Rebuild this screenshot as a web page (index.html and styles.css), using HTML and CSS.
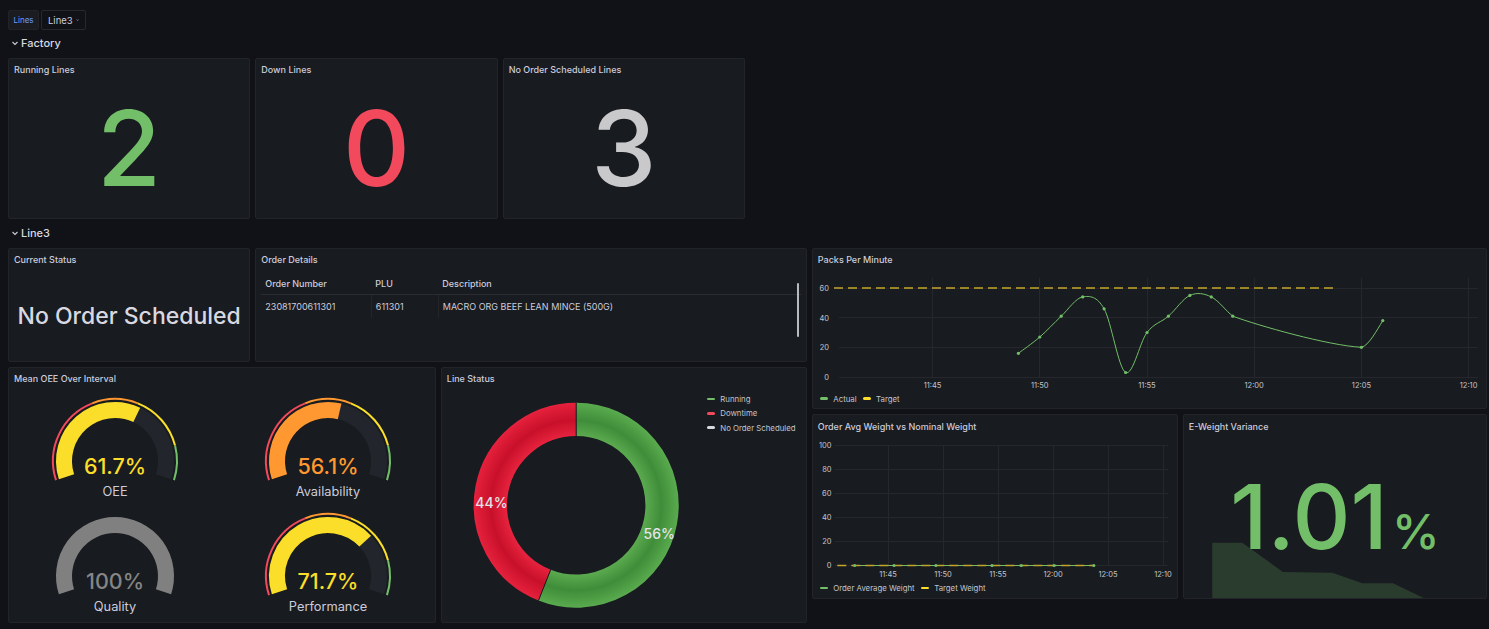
FILE: index.html
```html
<!DOCTYPE html>
<html lang="en">
<head>
<meta charset="utf-8">
<title>Factory Dashboard</title>
<link rel="stylesheet" href="styles.css">
</head>
<body>
<div class="topbar">
  <div class="chip chip-label">Lines</div>
  <div class="chip chip-select">Line3 <svg class="caret" width="6" height="6" viewBox="0 0 6 6"><polyline points="1,2 3,4 5,2"/></svg></div>
</div>

<div class="dash">
  <div class="row-head r-factory"><svg class="chev" width="8" height="8" viewBox="0 0 8 8"><polyline points="1.5,3 4,5.5 6.5,3"/></svg>Factory</div>

  <section class="panel p-running">
    <div class="panel-title">Running Lines</div>
    <div class="panel-body stat"><span class="stat-value green">2</span></div>
  </section>
  <section class="panel p-down">
    <div class="panel-title">Down Lines</div>
    <div class="panel-body stat"><span class="stat-value red">0</span></div>
  </section>
  <section class="panel p-noorder">
    <div class="panel-title">No Order Scheduled Lines</div>
    <div class="panel-body stat"><span class="stat-value grey">3</span></div>
  </section>

  <div class="row-head r-line3"><svg class="chev" width="8" height="8" viewBox="0 0 8 8"><polyline points="1.5,3 4,5.5 6.5,3"/></svg>Line3</div>

  <section class="panel p-status">
    <div class="panel-title">Current Status</div>
    <div class="panel-body stat"><span class="status-text">No Order Scheduled</span></div>
  </section>

  <section class="panel p-order">
    <div class="panel-title">Order Details</div>
    <div class="panel-body table-body">
      <table class="orders">
        <thead>
          <tr><th class="c1">Order Number</th><th class="c2">PLU</th><th>Description</th></tr>
        </thead>
        <tbody>
          <tr><td class="c1">23081700611301</td><td class="c2">611301</td><td>MACRO ORG BEEF LEAN MINCE (500G)</td></tr>
        </tbody>
      </table>
      <div class="scroll-thumb"></div>
    </div>
  </section>

  <section class="panel p-packs">
    <div class="panel-title">Packs Per Minute</div>
    <div class="panel-body chart-body">
      <svg class="chart" width="673" height="120" viewBox="0 0 673 120">
        <g class="grid">
          <line x1="26" y1="16.5" x2="665" y2="16.5"/>
          <line x1="26" y1="45.5" x2="665" y2="45.5"/>
          <line x1="26" y1="75.5" x2="665" y2="75.5"/>
          <line x1="26" y1="105.5" x2="665" y2="105.5"/>
          <line x1="119.5" y1="6" x2="119.5" y2="105"/>
          <line x1="226.5" y1="6" x2="226.5" y2="105"/>
          <line x1="334.5" y1="6" x2="334.5" y2="105"/>
          <line x1="441.5" y1="6" x2="441.5" y2="105"/>
          <line x1="548.5" y1="6" x2="548.5" y2="105"/>
          <line x1="655.5" y1="6" x2="655.5" y2="105"/>
        </g>
        <g class="axis ylab">
          <text x="16" y="16.5">60</text>
          <text x="16" y="46">40</text>
          <text x="16" y="75.5">20</text>
          <text x="16" y="105">0</text>
        </g>
        <g class="axis xlab">
          <text x="119.6" y="113">11:45</text>
          <text x="226.8" y="113">11:50</text>
          <text x="334" y="113">11:55</text>
          <text x="441.2" y="113">12:00</text>
          <text x="548.4" y="113">12:05</text>
          <text x="655.6" y="113">12:10</text>
        </g>
        <line class="target" x1="21" y1="16" x2="520" y2="16"/>
        <path class="actual" d="M205.4,81.3 C209,78.6 219.65,71.18 226.8,65 C233.95,58.82 241.05,50.88 248.2,44.2 C255.35,37.52 262.55,26.13 269.7,24.9 C276.85,23.67 283.95,24.2 291.1,36.8 C298.25,49.4 305.45,96.55 312.6,100.5 C319.75,104.45 326.85,69.88 334,60.5 C341.15,51.12 348.25,50.38 355.4,44.2 C362.55,38.02 369.75,26.62 376.9,23.4 C384.05,20.18 391.15,21.43 398.3,24.9 C405.45,28.37 413.5,39.5 419.8,44.2 C445,53.5 515,73.5 548.4,75.3 C555.5,74 564,58 569.8,48.6"/>
        <g class="dots">
          <circle cx="205.4" cy="81.3" r="1.6"/>
          <circle cx="226.8" cy="65" r="1.6"/>
          <circle cx="248.2" cy="44.2" r="1.6"/>
          <circle cx="269.7" cy="24.9" r="1.6"/>
          <circle cx="291.1" cy="36.8" r="1.6"/>
          <circle cx="312.6" cy="100.5" r="1.6"/>
          <circle cx="334" cy="60.5" r="1.6"/>
          <circle cx="355.4" cy="44.2" r="1.6"/>
          <circle cx="376.9" cy="23.4" r="1.6"/>
          <circle cx="398.3" cy="24.9" r="1.6"/>
          <circle cx="419.8" cy="44.2" r="1.6"/>
          <circle cx="548.4" cy="75.3" r="1.6"/>
          <circle cx="569.8" cy="48.6" r="1.6"/>
        </g>
      </svg>
      <div class="legend">
        <span class="lg-item"><i class="sw sw-green"></i>Actual</span>
        <span class="lg-item"><i class="sw sw-yellow"></i>Target</span>
      </div>
    </div>
  </section>

  <section class="panel p-oee">
    <div class="panel-title">Mean OEE Over Interval</div>
    <div class="panel-body gauges">
      <div class="gauge-cell">
        <svg class="gauge" width="140" height="104" viewBox="0 0 140 104">
          <path class="ring ring-red" d="M11.03,83.16 A62,62 0 0 1 47.18,6.35"/>
          <path class="ring ring-orange" d="M47.18,6.35 A62,62 0 0 1 92.82,6.35"/>
          <path class="ring ring-yellow" d="M92.82,6.35 A62,62 0 0 1 130.05,48.58"/>
          <path class="ring ring-green" d="M130.05,48.58 A62,62 0 0 1 128.97,83.16"/>
          <path class="bar bar-bg" d="M21.49,79.76 A51,51 0 1 1 118.51,79.76"/>
          <path class="bar bar-yellow" d="M21.49,79.76 A51,51 0 0 1 91.77,17.88"/>
          <text class="g-value t-yellow" x="70" y="69">61.7%</text>
          <text class="g-label" x="70" y="94.5">OEE</text>
        </svg>
      </div>
      <div class="gauge-cell">
        <svg class="gauge" width="140" height="104" viewBox="0 0 140 104">
          <path class="ring ring-red" d="M11.03,83.16 A62,62 0 0 1 47.18,6.35"/>
          <path class="ring ring-orange" d="M47.18,6.35 A62,62 0 0 1 92.82,6.35"/>
          <path class="ring ring-yellow" d="M92.82,6.35 A62,62 0 0 1 130.05,48.58"/>
          <path class="ring ring-green" d="M130.05,48.58 A62,62 0 0 1 128.97,83.16"/>
          <path class="bar bar-bg" d="M21.49,79.76 A51,51 0 1 1 118.51,79.76"/>
          <path class="bar bar-orange" d="M21.49,79.76 A51,51 0 0 1 81.63,14.34"/>
          <text class="g-value t-orange" x="70" y="69">56.1%</text>
          <text class="g-label" x="70" y="94.5">Availability</text>
        </svg>
      </div>
      <div class="gauge-cell">
        <svg class="gauge" width="140" height="104" viewBox="0 0 140 104">
          <path class="bar bar-grey" d="M21.49,79.76 A51,51 0 1 1 118.51,79.76"/>
          <text class="g-value t-grey" x="70" y="69">100%</text>
          <text class="g-label" x="70" y="94.5">Quality</text>
        </svg>
      </div>
      <div class="gauge-cell">
        <svg class="gauge" width="140" height="104" viewBox="0 0 140 104">
          <path class="ring ring-red" d="M11.03,83.16 A62,62 0 0 1 47.18,6.35"/>
          <path class="ring ring-orange" d="M47.18,6.35 A62,62 0 0 1 92.82,6.35"/>
          <path class="ring ring-yellow" d="M92.82,6.35 A62,62 0 0 1 130.05,48.58"/>
          <path class="ring ring-green" d="M130.05,48.58 A62,62 0 0 1 128.97,83.16"/>
          <path class="bar bar-bg" d="M21.49,79.76 A51,51 0 1 1 118.51,79.76"/>
          <path class="bar bar-yellow" d="M21.49,79.76 A51,51 0 0 1 107.22,29.14"/>
          <text class="g-value t-yellow" x="70" y="69">71.7%</text>
          <text class="g-label" x="70" y="94.5">Performance</text>
        </svg>
      </div>
    </div>
  </section>

  <section class="panel p-linestatus">
    <div class="panel-title">Line Status</div>
    <div class="panel-body pie-body">
      <svg class="pie" width="265" height="231" viewBox="0 0 265 231">
        <defs>
          <radialGradient id="gGreen" gradientUnits="userSpaceOnUse" cx="134.2" cy="114.3" r="102.5">
            <stop offset="0.67" stop-color="#5cab50"/>
            <stop offset="0.83" stop-color="#3f8d39"/>
            <stop offset="1" stop-color="#5aab4f"/>
          </radialGradient>
          <radialGradient id="gRed" gradientUnits="userSpaceOnUse" cx="134.2" cy="114.3" r="102.5">
            <stop offset="0.67" stop-color="#e8243f"/>
            <stop offset="0.83" stop-color="#c8102a"/>
            <stop offset="1" stop-color="#e6213d"/>
          </radialGradient>
        </defs>
        <path class="slice" stroke="url(#gGreen)" d="M134.2,28.45 A85.85,85.85 0 1 1 102.6,194.12"/>
        <path class="slice" stroke="url(#gRed)" d="M102.6,194.12 A85.85,85.85 0 0 1 134.2,28.45"/>
        <line class="sep" x1="134.2" y1="45.1" x2="134.2" y2="11.8"/>
        <line class="sep" x1="108.73" y1="178.64" x2="96.47" y2="209.6"/>
        <text class="pie-label" x="217.2" y="142.8">56%</text>
        <text class="pie-label" x="49.5" y="111.2">44%</text>
      </svg>
      <div class="pie-legend">
        <span class="lg-item"><i class="sw sw-green"></i>Running</span>
        <span class="lg-item"><i class="sw sw-red"></i>Downtime</span>
        <span class="lg-item"><i class="sw sw-white"></i>No Order Scheduled</span>
      </div>
    </div>
  </section>

  <section class="panel p-weight">
    <div class="panel-title">Order Avg Weight vs Nominal Weight</div>
    <div class="panel-body chart-body">
      <svg class="chart" width="364" height="143" viewBox="0 0 364 143">
        <g class="grid">
          <line x1="22" y1="7.5" x2="355" y2="7.5"/>
          <line x1="22" y1="31.5" x2="355" y2="31.5"/>
          <line x1="22" y1="55.5" x2="355" y2="55.5"/>
          <line x1="22" y1="79.5" x2="355" y2="79.5"/>
          <line x1="22" y1="103.5" x2="355" y2="103.5"/>
          <line x1="22" y1="127.5" x2="355" y2="127.5"/>
          <line x1="75.5" y1="7" x2="75.5" y2="127"/>
          <line x1="130.5" y1="7" x2="130.5" y2="127"/>
          <line x1="185.5" y1="7" x2="185.5" y2="127"/>
          <line x1="240.5" y1="7" x2="240.5" y2="127"/>
          <line x1="295.5" y1="7" x2="295.5" y2="127"/>
          <line x1="350.5" y1="7" x2="350.5" y2="127"/>
        </g>
        <g class="axis ylab">
          <text x="18.5" y="7.5">100</text>
          <text x="18.5" y="31.5">80</text>
          <text x="18.5" y="55.5">60</text>
          <text x="18.5" y="79.5">40</text>
          <text x="18.5" y="103.5">20</text>
          <text x="18.5" y="127.5">0</text>
        </g>
        <g class="axis xlab">
          <text x="75" y="136">11:45</text>
          <text x="130" y="136">11:50</text>
          <text x="185" y="136">11:55</text>
          <text x="240" y="136">12:00</text>
          <text x="295" y="136">12:05</text>
          <text x="350" y="136">12:10</text>
        </g>
        <line class="flat-green" x1="41.7" y1="127.5" x2="280.8" y2="127.5"/>
        <line class="target" x1="24.3" y1="127.5" x2="281.7" y2="127.5"/>
        <g class="dots">
          <circle cx="41.7" cy="127.5" r="1.6"/>
          <circle cx="81" cy="127.5" r="1.6"/>
          <circle cx="122.9" cy="127.5" r="1.6"/>
          <circle cx="179" cy="127.5" r="1.6"/>
          <circle cx="208.3" cy="127.5" r="1.6"/>
          <circle cx="241" cy="127.5" r="1.6"/>
          <circle cx="280.8" cy="127.5" r="1.6"/>
        </g>
      </svg>
      <div class="legend">
        <span class="lg-item"><i class="sw sw-green"></i>Order Average Weight</span>
        <span class="lg-item"><i class="sw sw-yellow"></i>Target Weight</span>
      </div>
    </div>
  </section>

  <section class="panel p-eweight">
    <div class="panel-title">E-Weight Variance</div>
    <div class="panel-body stat spark-body">
      <svg class="spark" width="302" height="160" viewBox="0 0 302 160">
        <polygon points="28.3,160 28.3,104.7 58.3,104.7 99,134 148.3,134.7 178.3,145.3 209,145.3 239.7,160"/>
      </svg>
      <span class="big-value">1.01<span class="unit">%</span></span>
    </div>
  </section>
</div>
</body>
</html>
```

FILE: styles.css
```css
* { box-sizing: border-box; }
html, body { margin: 0; height: 100%; }
body {
  background: #111217;
  font-family: Inter, "Noto Sans", sans-serif;
  color: #ccccdc;
  overflow: hidden;
}

/* top variable bar */
.topbar {
  display: flex;
  gap: 2px;
  height: 34px;
  padding: 10px 8px 4px;
}
.chip {
  height: 20px;
  display: flex;
  align-items: center;
  border-radius: 2px;
}
.chip-label {
  width: 31px;
  justify-content: center;
  background: #1a1c21;
  border: 1px solid #202227;
  color: #6e9fff;
  font-size: 8px;
}
.chip-select {
  width: 45px;
  padding: 0 6px;
  gap: 3px;
  border: 1px solid #26282d;
  font-size: 9.5px;
  color: #ccccdc;
}
.caret polyline { fill: none; stroke: #ccccdc; stroke-width: 1; }

/* dashboard grid */
.dash {
  display: grid;
  grid-template-columns: repeat(24, 1fr);
  grid-auto-rows: 18.75px;
  gap: 5px;
  padding: 0 2px 0 8px;
}
.row-head {
  grid-column: 1 / -1;
  display: flex;
  align-items: center;
  gap: 2px;
  padding-left: 3px;
  font-size: 11px;
  font-weight: 500;
  color: #d8d9e0;
}
.chev polyline { fill: none; stroke: #ccccdc; stroke-width: 1.1; }
.r-factory { grid-row: 1; }
.r-line3 { grid-row: 9; }

.p-running  { grid-column: 1 / span 4;  grid-row: 2 / span 7; }
.p-down     { grid-column: 5 / span 4;  grid-row: 2 / span 7; }
.p-noorder  { grid-column: 9 / span 4;  grid-row: 2 / span 7; }
.p-status   { grid-column: 1 / span 4;  grid-row: 10 / span 5; }
.p-order    { grid-column: 5 / span 9;  grid-row: 10 / span 5; }
.p-packs    { grid-column: 14 / span 11; grid-row: 10 / span 7; }
.p-oee      { grid-column: 1 / span 7;  grid-row: 15 / span 11; }
.p-linestatus { grid-column: 8 / span 6; grid-row: 15 / span 11; }
.p-weight   { grid-column: 14 / span 6; grid-row: 17 / span 8; }
.p-eweight  { grid-column: 20 / span 5; grid-row: 17 / span 8; }

.panel {
  background: #181b1f;
  border: 1px solid #222429;
  border-radius: 2px;
  display: flex;
  flex-direction: column;
  min-width: 0;
  min-height: 0;
  overflow: hidden;
}
.panel-title {
  flex: none;
  height: 22px;
  display: flex;
  align-items: center;
  padding: 0 5px;
  font-size: 9px;
  font-weight: 500;
  color: #ccccdc;
  white-space: nowrap;
}
.panel-body {
  flex: 1;
  min-height: 0;
  position: relative;
}

/* stats */
.stat {
  display: flex;
  align-items: center;
  justify-content: center;
}
.stat-value {
  font-size: 104px;
  line-height: 1;
  font-weight: 500;
  margin-bottom: 2px;
}
.green { color: #73bf69; }
.red { color: #f2495c; }
.grey { color: #c9c9cc; }
.status-text {
  font-size: 23px;
  font-weight: 500;
  color: #d8d9e0;
  white-space: nowrap;
}

/* table */
.table-body { padding: 1px 5px 0; }
.orders {
  width: 540px;
  border-collapse: collapse;
  font-size: 9px;
  color: #ccccdc;
}
.orders th {
  height: 23px;
  text-align: left;
  font-weight: 500;
  padding: 0 4px;
  border-bottom: 1px solid #2a2c31;
}
.orders td {
  height: 23px;
  padding: 0 4px;
  border-right: 1px solid #23252a;
}
.orders td:last-child { border-right: none; }
.orders .c1 { width: 110px; }
.orders .c2 { width: 67px; }
.scroll-thumb {
  position: absolute;
  left: 541px;
  top: 12px;
  width: 2px;
  height: 54px;
  border-radius: 1px;
  background: #b9bac0;
}

/* charts */
.chart-body { display: flex; flex-direction: column; padding-top: 1px; }
.chart { display: block; flex: none; }
.grid line { stroke: #25272c; stroke-width: 1; }
.axis text {
  font-family: Inter, "Noto Sans", sans-serif;
  font-size: 7.5px;
  fill: #c3c4cc;
  dominant-baseline: central;
}
.ylab text { text-anchor: end; }
.xlab text { text-anchor: middle; }
.target {
  stroke: #c4a52b;
  stroke-width: 1.6;
  stroke-dasharray: 9 5;
}
.actual { fill: none; stroke: #73bf69; stroke-width: 1; }
.flat-green { stroke: #73bf69; stroke-width: 1; }
.dots circle { fill: #73bf69; }

.legend {
  height: 14px;
  display: flex;
  align-items: center;
  gap: 6px;
  padding-left: 7px;
  font-size: 7.8px;
  color: #c3c4cc;
}
.lg-item { display: flex; align-items: center; gap: 5px; white-space: nowrap; }
.sw {
  display: inline-block;
  width: 8.5px;
  height: 2.7px;
  border-radius: 1.5px;
}
.sw-green { background: #73bf69; }
.sw-yellow { background: #fade2a; }
.sw-red { background: #f2495c; }
.sw-white { background: #d8d9e0; }

/* gauges */
.gauges {
  display: grid;
  grid-template-columns: 1fr 1fr;
  grid-template-rows: 1fr 1fr;
  padding-top: 1px;
}
.gauge-cell {
  display: flex;
  justify-content: center;
  padding-top: 6px;
}
.gauge { display: block; }
.ring { fill: none; stroke-width: 2; }
.ring-red { stroke: #f2495c; }
.ring-orange { stroke: #ff9830; }
.ring-yellow { stroke: #fade2a; }
.ring-green { stroke: #73bf69; }
.bar { fill: none; stroke-width: 16; }
.bar-bg { stroke: #22252b; }
.bar-yellow { stroke: #fade2a; }
.bar-orange { stroke: #ff9830; }
.bar-grey { stroke: #808080; }
.g-value {
  font-family: Inter, "Noto Sans", sans-serif;
  font-size: 21.5px;
  font-weight: 500;
  text-anchor: middle;
  dominant-baseline: central;
}
.t-yellow { fill: #fade2a; }
.t-orange { fill: #ff9830; }
.t-grey { fill: #858585; }
.g-label {
  font-family: Inter, "Noto Sans", sans-serif;
  font-size: 12.8px;
  fill: #ccccdc;
  text-anchor: middle;
  dominant-baseline: central;
}

/* pie */
.pie-body { display: flex; padding-top: 1px; }
.pie { display: block; flex: none; }
.slice { fill: none; stroke-width: 33.3; }
.sep { stroke: #181b1f; stroke-width: 1; }
.pie-label {
  font-family: Inter, "Noto Sans", sans-serif;
  font-size: 14px;
  font-weight: 500;
  fill: #e4e4ea;
  text-anchor: middle;
  dominant-baseline: central;
}
.pie-legend {
  display: flex;
  flex-direction: column;
  padding-top: 1.5px;
  font-size: 7.8px;
  color: #c3c4cc;
}
.pie-legend .lg-item { height: 14.3px; }

/* e-weight */
.spark-body { overflow: hidden; padding-top: 1px; }
.spark {
  position: absolute;
  left: 0;
  top: 1px;
}
.spark polygon { fill: #2a3c2d; }
.big-value {
  position: relative;
  font-size: 90px;
  line-height: 1;
  font-weight: 500;
  color: #73bf69;
  margin-bottom: 2px;
  white-space: nowrap;
}
.unit { font-size: 48px; margin-left: 4px; }
```
